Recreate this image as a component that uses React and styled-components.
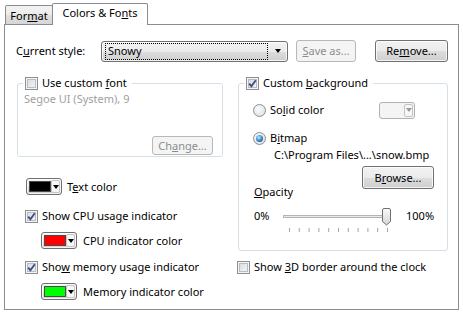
import React from "react";
import styled, { createGlobalStyle, css } from "styled-components";

const GlobalStyle = createGlobalStyle`
  html, body { margin: 0; padding: 0; background: #fff; }
  body {
    font-family: "Noto Sans", "Open Sans", sans-serif;
    font-size: 11px;
    line-height: 14px;
    color: #000;
  }
  #root { width: 463px; height: 314px; overflow: hidden; }
`;

const btnFace = css`
  border: 1px solid #707070;
  border-radius: 3px;
  background: linear-gradient(#f2f2f2, #ebebeb 50%, #dddddd 51%, #cfcfcf);
  box-shadow: inset 0 0 0 1px rgba(255, 255, 255, 0.75);
`;

const Dialog = styled.div`
  width: 463px;
  height: 314px;
  box-sizing: border-box;
  padding-left: 4px;
  background: #fff;
`;

// tabs along the top
const TabStrip = styled.div`
  display: flex;
  align-items: flex-end;
  height: 24px;
  padding-left: 1px;
`;

const Tab = styled.div`
  box-sizing: border-box;
  display: flex;
  align-items: center;
  justify-content: center;
  border: 1px solid #898c95;
  border-bottom: none;
  border-radius: 2px 2px 0 0;
  ${(p) =>
    p.$active
      ? css`
          width: 96px;
          height: 22px;
          margin: 0 0 -1px -1px;
          padding-bottom: 4px;
          background: #fff;
          position: relative;
          z-index: 1;
        `
      : css`
          width: 48px;
          height: 19px;
          padding-top: 2px;
          background: linear-gradient(#f3f3f3, #ebebeb 50%, #dfdfdf 51%, #d6d6d6);
        `}
`;

const Panel = styled.div`
  box-sizing: border-box;
  width: 455px;
  height: 286px;
  border: 1px solid #898c95;
  padding: 15px 10px 0 11px;
`;

const Key = styled.span`
  text-decoration: underline;
`;

// first row: current style
const StyleRow = styled.div`
  display: flex;
  align-items: center;
  height: 22px;
`;

const FieldLabel = styled.span`
  width: 85px;
`;

const Combo = styled.div`
  box-sizing: border-box;
  width: 187px;
  height: 21px;
  display: flex;
  align-items: center;
  padding: 0 6px 0 3px;
  ${btnFace}
`;

const FocusText = styled.span`
  flex: 1;
  height: 15px;
  line-height: 14px;
  padding-left: 2px;
  border: 1px dotted #000;
  margin-right: 7px;
`;

const DownArrow = styled.span`
  width: 0;
  height: 0;
  border-left: 3.5px solid transparent;
  border-right: 3.5px solid transparent;
  border-top: 4px solid ${(p) => (p.$disabled ? "#9a9a9a" : "#000")};
`;

const Button = styled.button`
  box-sizing: border-box;
  width: ${(p) => p.$w}px;
  height: ${(p) => p.$h || 22}px;
  padding: 0;
  font: inherit;
  line-height: 14px;
  color: #000;
  ${btnFace}
  &:disabled {
    color: #8d8d8d;
    border-color: #b5b9bc;
    background: #f4f4f4;
    box-shadow: none;
  }
`;

const SaveButton = styled(Button)`
  margin-left: 8px;
`;

const RemoveButton = styled(Button)`
  margin-left: 19px;
`;

// two columns below
const Columns = styled.div`
  display: grid;
  grid-template-columns: 206px 210px;
  column-gap: 15px;
  margin: 14px 0 0 1px;
`;

const Column = styled.div`
  display: flex;
  flex-direction: column;
`;

const GroupBox = styled.div`
  box-sizing: border-box;
  height: ${(p) => p.$h}px;
  margin-top: 7px;
  border: 1px solid #d5dfe5;
  border-radius: 3px;
  display: flex;
  flex-direction: column;
  padding-left: ${(p) => p.$pad || 0}px;
`;

const GroupTitle = styled.label`
  display: flex;
  align-items: center;
  gap: 4px;
  align-self: flex-start;
  height: 14px;
  margin: -8px 0 0 ${(p) => p.$ml}px;
  padding: 0 5px 0 2px;
  background: #fff;
`;

const CheckRow = styled.label`
  display: flex;
  align-items: center;
  gap: 4px;
  height: 14px;
  margin: ${(p) => p.$mt}px 0 0 ${(p) => p.$ml}px;
`;

const CheckBox = styled.span`
  box-sizing: border-box;
  flex: none;
  width: 13px;
  height: 13px;
  display: flex;
  align-items: center;
  justify-content: center;
  border: 1px solid #8e8f8f;
  background: linear-gradient(135deg, #d3d7dc, #f9f9f9);
  box-shadow: inset 0 0 0 1px #f4f4f4, inset 0 0 0 2px #b9bdc3;
`;

const Radio = styled.span`
  box-sizing: border-box;
  flex: none;
  width: 13px;
  height: 13px;
  border-radius: 50%;
  display: flex;
  align-items: center;
  justify-content: center;
  border: 1px solid #8e8f8f;
  background: radial-gradient(circle at 40% 35%, #fdfdfd, #d5d8dc);
`;

const RadioDot = styled.span`
  width: 7px;
  height: 7px;
  border-radius: 50%;
  background: radial-gradient(circle at 40% 35%, #b6ecff, #2f86c6 55%, #0f3f70);
`;

const FontName = styled.div`
  color: #a0a0a0;
  margin: 2px 0 0 6px;
`;

const ChangeButton = styled(Button)`
  align-self: flex-end;
  margin: 30px 9px 0 0;
`;

const ColorRow = styled.div`
  display: flex;
  align-items: center;
  gap: ${(p) => p.$gap || 6}px;
  height: 17px;
  margin: ${(p) => p.$mt}px 0 0 ${(p) => p.$ml}px;
`;

const ColorCombo = styled.div`
  box-sizing: border-box;
  flex: none;
  width: 36px;
  height: 17px;
  display: flex;
  align-items: center;
  padding: 0 1px 0 2px;
  ${btnFace}
  ${(p) =>
    p.$disabled &&
    css`
      border-color: #adb2b5;
      background: #f4f4f4;
      box-shadow: none;
    `}
`;

const Swatch = styled.span`
  box-sizing: border-box;
  width: 22px;
  height: 11px;
  border: 1px solid #4a4a4a;
  background: ${(p) => p.$color};
`;

const ArrowBox = styled.span`
  box-sizing: border-box;
  margin-left: auto;
  width: 9px;
  height: 13px;
  display: flex;
  align-items: center;
  justify-content: center;
  border: 1px solid #c4c4c4;
  border-radius: 2px;
  background: #f7f7f7;
`;

const OptionRow = styled.label`
  display: flex;
  align-items: center;
  gap: 4px;
  height: 16px;
  margin-top: 12px;
  padding-right: 32px;
`;

const PushRight = styled.span`
  margin-left: auto;
`;

const PathText = styled.div`
  margin: 2px 0 0 21px;
`;

const BrowseButton = styled(Button)`
  align-self: flex-end;
  margin: 4px 13px 0 0;
`;

const OpacityLabel = styled.div`
  margin: -4px 0 0 1px;
`;

const SliderRow = styled.div`
  display: flex;
  align-items: flex-start;
  height: 26px;
  margin: 9px 0 0 1px;
`;

const SliderEnd = styled.span`
  width: ${(p) => p.$w}px;
  margin: 1px 0 0 ${(p) => p.$ml || 0}px;
`;

const ColorPicker = ({ color, disabled }) => (
  <ColorCombo $disabled={disabled}>
    {color ? <Swatch $color={color} /> : null}
    <ArrowBox>
      <DownArrow $disabled={disabled} />
    </ArrowBox>
  </ColorCombo>
);

const Check = ({ checked }) => (
  <CheckBox>
    {checked && (
      <svg width="9" height="9" viewBox="0 0 9 9">
        <path d="M1.2 4.6 L3.4 7.2 L7.8 1.2" fill="none" stroke="#3d4f80" strokeWidth="1.9" />
      </svg>
    )}
  </CheckBox>
);

const Slider = () => {
  const ticks = [];
  for (let i = 0; i <= 10; i++) {
    const x = 8.5 + i * 9.8;
    ticks.push(<line key={i} x1={x} x2={x} y1="20" y2="24" stroke="#a5a5a5" strokeWidth="1" />);
  }
  return (
    <svg width="112" height="26" viewBox="0 0 112 26">
      <defs>
        <linearGradient id="thumb" x1="0" y1="0" x2="0" y2="1">
          <stop offset="0" stopColor="#fafafa" />
          <stop offset="1" stopColor="#d6d6d6" />
        </linearGradient>
      </defs>
      <rect x="2.5" y="7.5" width="107" height="2" fill="#eaeaea" stroke="#b4b4b4" />
      {ticks}
      <path
        d="M101.5 2 Q101.5 0.5 103 0.5 H108 Q109.5 0.5 109.5 2 V13.5 L105.5 17 L101.5 13.5 Z"
        fill="url(#thumb)"
        stroke="#707070"
      />
    </svg>
  );
};

export default function App() {
  return (
    <Dialog>
      <GlobalStyle />
      <TabStrip>
        <Tab>
          For<Key>m</Key>at
        </Tab>
        <Tab $active>
          Colors &amp; Fo<Key>n</Key>ts
        </Tab>
      </TabStrip>
      <Panel>
        <StyleRow>
          <FieldLabel>
            C<Key>u</Key>rrent style:
          </FieldLabel>
          <Combo>
            <FocusText>Snowy</FocusText>
            <DownArrow />
          </Combo>
          <SaveButton $w={60} disabled>
            <Key>S</Key>ave as...
          </SaveButton>
          <RemoveButton $w={73}>
            Re<Key>m</Key>ove...
          </RemoveButton>
        </StyleRow>

        <Columns>
          <Column>
            <GroupBox $h={74}>
              <GroupTitle $ml={5}>
                <Check />
                <span>
                  Use custom <Key>f</Key>ont
                </span>
              </GroupTitle>
              <FontName>Segoe UI (System), 9</FontName>
              <ChangeButton $w={61} $h={19} disabled>
                Ch<Key>a</Key>nge...
              </ChangeButton>
            </GroupBox>

            <ColorRow $mt={21} $ml={9} $gap={5}>
              <ColorPicker color="#000" />
              <span>
                T<Key>e</Key>xt color
              </span>
            </ColorRow>
            <CheckRow $mt={14} $ml={8}>
              <Check checked />
              <span>
                Show CPU usa<Key>g</Key>e indicator
              </span>
            </CheckRow>
            <ColorRow $mt={9} $ml={24}>
              <ColorPicker color="#ff0000" />
              <span>CPU indicator color</span>
            </ColorRow>
            <CheckRow $mt={11} $ml={8}>
              <Check checked />
              <span>
                Sho<Key>w</Key> memory usage indicator
              </span>
            </CheckRow>
            <ColorRow $mt={9} $ml={24}>
              <ColorPicker color="#00ff00" />
              <span>Memory indicator color</span>
            </ColorRow>
          </Column>

          <Column>
            <GroupBox $h={168} $pad={14}>
              <GroupTitle $ml={-9}>
                <Check checked />
                <span>
                  Custom <Key>b</Key>ackground
                </span>
              </GroupTitle>
              <OptionRow>
                <Radio />
                <span>
                  So<Key>l</Key>id color
                </span>
                <PushRight>
                  <ColorPicker disabled />
                </PushRight>
              </OptionRow>
              <OptionRow>
                <Radio>
                  <RadioDot />
                </Radio>
                <span>
                  B<Key>i</Key>tmap
                </span>
              </OptionRow>
              <PathText>C:\Program Files\...\snow.bmp</PathText>
              <BrowseButton $w={72} $h={23}>
                B<Key>r</Key>owse...
              </BrowseButton>
              <OpacityLabel>
                <Key>O</Key>pacity
              </OpacityLabel>
              <SliderRow>
                <SliderEnd $w={27}>0%</SliderEnd>
                <Slider />
                <SliderEnd $w={40} $ml={13}>
                  100%
                </SliderEnd>
              </SliderRow>
            </GroupBox>
            <CheckRow $mt={9} $ml={-1}>
              <Check />
              <span>
                Show <Key>3</Key>D border around the clock
              </span>
            </CheckRow>
          </Column>
        </Columns>
      </Panel>
    </Dialog>
  );
}
